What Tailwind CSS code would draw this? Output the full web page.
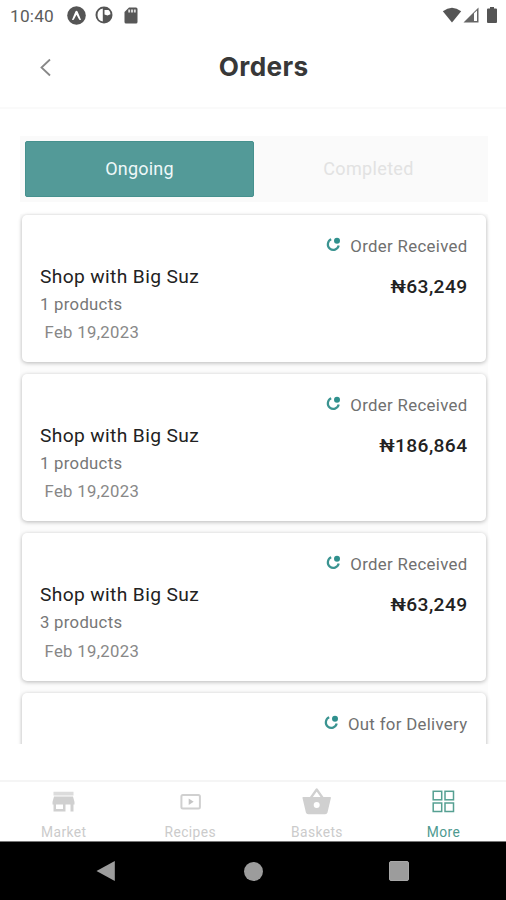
<!DOCTYPE html>
<html lang="en">
<head>
<meta charset="utf-8">
<title>Orders</title>
<script src="https://cdn.jsdelivr.net/npm/@tailwindcss/browser@4"></script>
</head>
<body class="bg-white">
<svg class="hidden">
  <symbol id="progress" viewBox="0 0 15 15"><path d="M5.200 2.300A5.500 5.500 0 1 0 12.700 8.600" fill="none" stroke="#3b9491" stroke-width="2.200"/><circle cx="11" cy="3.700" r="3" fill="#2f908d"/></symbol>
</svg>
<div class="w-[506px] h-[900px] flex flex-col overflow-hidden bg-white font-['Roboto',sans-serif]">
  <div class="h-8 shrink-0 flex items-center pl-[10px] pr-[8px] text-[#5c5c5c]">
    <span class="w-[57px] text-[17.300px] leading-8 tracking-[0.200px]">10:40</span>
    <svg class="w-[19px] h-[19px] -translate-y-px" viewBox="0 0 19 19"><circle cx="9.500" cy="9.500" r="9.300" fill="#555"/><path d="M5 13.700 8.300 5.700Q9.500 3.800 10.700 5.700L14 13.700Q12.500 14.800 11.700 12.800L9.500 8.800 7.300 12.800Q6.500 14.800 5 13.700Z" fill="#fff"/></svg>
    <svg class="w-[18px] h-[18px] ml-[9px] -translate-y-px" viewBox="0 0 18 18"><circle cx="9" cy="9" r="8.500" fill="#555"/><path d="M7.800 2.500Q2.500 3.500 2.500 9T7.800 15.500ZM9.500 4H13.500Q15.500 5.500 15.500 8.300L12.500 9.500 9.500 8.500Z" fill="#fff"/></svg>
    <svg class="w-[14px] h-[17px] ml-[11px] -translate-y-px" viewBox="0 0 14 17"><path d="M5 .5H12Q13.500 .5 13.500 2V15Q13.500 16.500 12 16.500H2Q.5 16.500 .5 15V5Z" fill="#575757"/><path d="M5.200 2.500V5.500M8 2.500V5.500M10.800 2.500V5.500" stroke="#ddd" stroke-width="1.900"/></svg>
    <svg class="w-[20px] h-[16px] ml-auto -translate-x-px -translate-y-px" viewBox="0 0 20 16"><path d="M.8 4.300Q10-3 19.200 4.300L10 15.500Z" fill="#555"/></svg>
    <svg class="w-[16px] h-[16px] ml-[1px] -translate-x-px -translate-y-px" viewBox="0 0 16 16"><path d="M.5 15.500 15.500.5V15.500Z" fill="#666"/><path d="M11 6.300 14 3.500V14H11Z" fill="#fff"/></svg>
    <svg class="w-[10px] h-[16px] ml-[8px] -translate-x-px -translate-y-px" viewBox="0 0 10 16"><path d="M3 0H7V1.500H9Q10 1.500 10 2.500V15Q10 16 9 16H1Q0 16 0 15V2.500Q0 1.500 1 1.500H3Z" fill="#555"/></svg>
  </div>
  <header class="h-[77px] shrink-0 border-b-2 border-[#fafafa] grid grid-cols-[100px_1fr_80px] pb-[6px] items-center">
    <svg class="w-[12px] h-[18px] ml-[40px] translate-y-[0.500px]" viewBox="0 0 12 18"><path d="M10 1 1.500 9 10 17" fill="none" stroke="#888" stroke-width="1.800"/></svg>
    <h1 class="justify-self-center font-['Inter',sans-serif] font-bold text-[26.200px] leading-8 tracking-[0.350px] text-[#383838] translate-x-[0.700px] -translate-y-[0.500px]">Orders</h1>
  </header>
  <main class="h-[635px] shrink-0 overflow-hidden pt-[27px] pl-5 pr-[18px]">
    <div class="h-[66px] bg-[#fafafa] p-[5px] pb-[4px] flex text-[18px]">
      <div class="w-[229px] h-[56px] rounded-[2px] bg-[#539a98] border border-[#46918e] text-[#eef8f8] flex items-center justify-center"><span class="tracking-[0.200px] -translate-y-px">Ongoing</span></div>
      <div class="w-[229px] h-[56px] text-[#e2e2e2] flex items-center justify-center"><span class="tracking-[0.350px] -translate-y-px">Completed</span></div>
    </div>
    <div id="orders" class="mt-[12px] pt-px pb-3 flex flex-col gap-[12px] bg-[#fafafa]/60 pr-[2px] pl-[1.500px]"></div>
  </main>
  <div class="h-[36px] shrink-0 bg-white"></div>
  <nav class="h-[61px] shrink-0 border-t-2 border-[#f5f5f5] grid grid-cols-4 text-[13.800px] leading-4 text-[#cbcbcb]">
    <div class="flex flex-col items-center pt-[6px] translate-x-[0.500px]">
      <svg class="w-[28px] h-[28px] mb-[8px]" viewBox="0 0 28 28"><path d="M4 3.800H24V7.500H4Z" fill="#dcdcdc"/><path d="M4.500 8.500H23.500L25 14V16.500H24V23.500H21V16.500H16V23.500H4V16.500H3V14ZM6.500 16.500V21H13.500V16.500Z" fill="#d0d0d0" fill-rule="evenodd"/></svg>
      <span class="tracking-[0.400px]">Market</span>
    </div>
    <div class="flex flex-col items-center pt-[6px] translate-x-[0.500px]">
      <svg class="w-[28px] h-[28px] mb-[8px]" viewBox="0 0 28 28"><rect x="4.900" y="7" width="18.500" height="13.500" rx="1.500" fill="none" stroke="#d0d0d0" stroke-width="2"/><path d="M12.200 10.500V17L17.200 13.700Z" fill="#c5c5c5"/></svg>
      <span class="tracking-[0.400px]">Recipes</span>
    </div>
    <div class="flex flex-col items-center pt-[6px] translate-x-[0.700px]">
      <svg class="w-[30px] h-[28px] mb-[8px]" viewBox="0 0 30 28"><path d="M9 10 15 1.500 21 10" fill="none" stroke="#d0d0d0" stroke-width="2.300" stroke-linejoin="round"/><path d="M1.500 9H28.500Q29.500 9 29.200 10L25.800 24.500Q25.300 26.300 23.500 26.300H6.500Q4.700 26.300 4.200 24.500L.8 10Q.5 9 1.500 9Z" fill="#d0d0d0"/><circle cx="15" cy="17" r="3" fill="#fff"/></svg>
      <span class="tracking-[0.400px]">Baskets</span>
    </div>
    <div class="flex flex-col items-center pt-[6px] text-[#4e9a90] translate-x-[0.700px]">
      <svg class="w-[28px] h-[28px] mb-[8px]" viewBox="0 0 28 28" fill="none" stroke="#56a092" stroke-width="1.500"><rect x="3.500" y="3.300" width="8.500" height="8.500"/><rect x="15.300" y="3.300" width="8.500" height="8.500"/><rect x="3.500" y="15" width="8.500" height="8.500"/><rect x="15.300" y="15" width="8.500" height="8.500"/></svg>
      <span class="tracking-[0.400px]">More</span>
    </div>
  </nav>
  <div class="h-[59px] shrink-0 bg-black border-t border-[#777] flex items-center pl-[96px]">
    <svg class="w-[20px] h-[22px]" viewBox="0 0 20 22"><path d="M.5 11 18.800 1V21Z" fill="#9c9c9c"/></svg>
    <div class="w-[19px] h-[19px] rounded-full bg-[#9c9c9c] ml-[128px]"></div>
    <div class="w-[20px] h-[20px] rounded-[2px] bg-[#9c9c9c] border border-[#a8a8a8] ml-[126px]"></div>
  </div>
</div>
<script>
const orders = [
  ['Order Received', 'Shop with Big Suz', '1 products', 'Feb 19,2023', '₦63,249'],
  ['Order Received', 'Shop with Big Suz', '1 products', 'Feb 19,2023', '₦186,864'],
  ['Order Received', 'Shop with Big Suz', '3 products', 'Feb 19,2023', '₦63,249'],
  ['Out for Delivery', '', '', '', ''],
];
document.getElementById('orders').innerHTML = orders.map(([status, name, count, date, price]) => `
  <article class="h-[147.200px] shrink-0 rounded-[5px] bg-white shadow-[0_1px_4px_rgba(0,0,0,0.280)] flex justify-between pl-[18.500px] pr-[18.500px]">
    <div class="pt-[49.500px]">
      <div class="text-[19.200px] leading-6 tracking-[0.370px] text-[#222]">${name}</div>
      <div class="mt-[4px] text-[16.700px] leading-6 tracking-[0.300px] text-[#777]">${count}</div>
      <div class="mt-[4.800px] ml-[4.500px] text-[16.700px] leading-6 tracking-[0.330px] text-[#888]">${date}</div>
    </div>
    <div class="pt-[19px] flex flex-col items-end">
      <div class="flex items-start text-[16.800px] leading-6 tracking-[0.320px] text-[#707070]"><svg class="w-[15px] h-[15px] mt-[3px] mr-[9px]"><use href="#progress"/></svg><span>${status}</span></div>
      <div class="mt-[16.600px] text-[19.200px] leading-6 font-medium tracking-[0.400px] text-[#222]">${price}</div>
    </div>
  </article>`).join('');
</script>
</body>
</html>
